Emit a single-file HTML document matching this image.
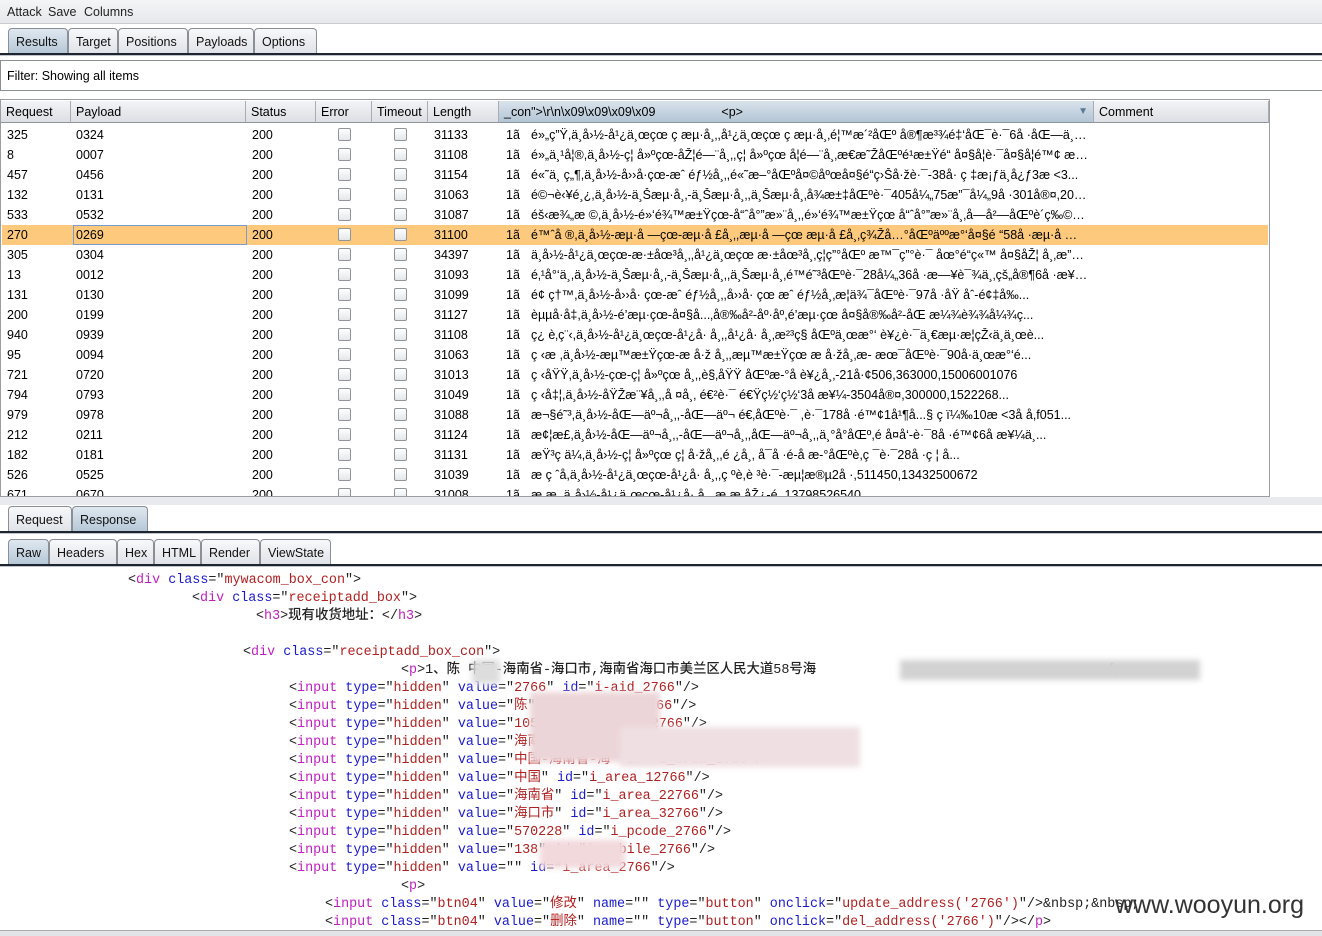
<!DOCTYPE html>
<html><head><meta charset="utf-8"><style>
*{margin:0;padding:0;box-sizing:border-box}
body{width:1322px;height:936px;overflow:hidden;background:#fff;font-family:"Liberation Sans","Noto Sans CJK SC",sans-serif;font-size:12px;color:#000;position:relative}
.abs{position:absolute}
.menu{left:0;top:0;width:1322px;height:24px;background:linear-gradient(#f4f5f7,#e6e8ec);border-bottom:1px solid #c8cbd0}
.menu span{position:absolute;top:5px;font-size:12.5px;color:#222}
.tab{position:absolute;height:26px;border:1px solid #8a8f96;border-bottom:none;border-radius:4px 4px 0 0;background:linear-gradient(#f7f8fa,#dfe2e7);font-size:12.5px;padding:6px 7px 0;color:#111}
.tab.sel{background:linear-gradient(#dfe8f0,#b4c6d6)}
.hline{position:absolute;left:0;width:1322px;height:3px;border-top:2px solid #1d2530;border-bottom:1px solid #c0c4ca}
.th{position:absolute;top:101px;height:22px;background:linear-gradient(#f3f4f6,#dcdfe4);border-right:1px solid #a9adb3;border-bottom:1px solid #8e949b;padding:4px 5px;font-size:12.5px}
.row{position:absolute;left:2px;width:1266px;height:20px;font-size:12.5px}
.row span{position:absolute;top:3px;white-space:nowrap;overflow:hidden;line-height:15px;height:16px}
.cb{position:absolute;top:3px;width:13px;height:13px;border:1px solid #8f949a;border-radius:2px;background:linear-gradient(#fff,#e4e6e9)}
.code{position:absolute;font-family:"Liberation Mono","Noto Sans CJK SC",monospace;font-size:13.4px;white-space:pre;color:#222;height:18px;line-height:18px;overflow:visible}
.code b{font-weight:500}
.t{color:#c020c0}.a{color:#1a1acc}.v{color:#b02020}
.blur{position:absolute;filter:blur(3px)}
</style></head><body>
<div class="abs menu"><span style="left:7px">Attack</span><span style="left:48px">Save</span><span style="left:84px">Columns</span></div>
<div class="tab sel" style="left:8px;top:28px;width:60px">Results</div>
<div class="tab" style="left:68px;top:28px;width:50px">Target</div>
<div class="tab" style="left:118px;top:28px;width:70px">Positions</div>
<div class="tab" style="left:188px;top:28px;width:66px">Payloads</div>
<div class="tab" style="left:254px;top:28px;width:63px">Options</div>
<div class="hline" style="top:53px"></div>
<div class="abs" style="left:0;top:60px;width:1322px;height:31px;border:1px solid #8a8f96;border-right:none;background:#fff"><span style="position:absolute;left:6px;top:8px;font-size:12.5px">Filter: Showing all items</span></div>
<div class="abs" style="left:0;top:99px;width:1270px;height:398px;border:1px solid #9a9ea4;background:#fff;overflow:hidden"><div id="rows"></div></div>
<div class="th" style="left:1px;width:70px">Request</div>
<div class="th" style="left:71px;width:175px">Payload</div>
<div class="th" style="left:246px;width:70px">Status</div>
<div class="th" style="left:316px;width:56px">Error</div>
<div class="th" style="left:372px;width:56px">Timeout</div>
<div class="th" style="left:428px;width:71px">Length</div>
<div class="th" style="left:499px;width:595px;background:linear-gradient(#d9e3ec,#b3c5d5)">_con"&gt;\r\n\x09\x09\x09\x09 &nbsp;&nbsp;&nbsp;&nbsp;&nbsp;&nbsp;&nbsp;&nbsp;&nbsp;&nbsp;&nbsp;&nbsp;&nbsp;&nbsp;&nbsp;&nbsp;&nbsp;&nbsp;&lt;p&gt;<span style="position:absolute;right:5px;top:5px;color:#5a7a98;font-size:10px">▼</span></div>
<div class="th" style="left:1094px;width:175px">Comment</div>
<div class="abs" style="left:0;top:497px;width:1322px;height:8px;background:#e8eaed"></div>
<div class="tab" style="left:8px;top:506px;width:64px">Request</div>
<div class="tab sel" style="left:72px;top:506px;width:76px">Response</div>
<div class="hline" style="top:531px"></div>
<div class="tab sel" style="left:8px;top:539px;width:41px">Raw</div>
<div class="tab" style="left:49px;top:539px;width:68px">Headers</div>
<div class="tab" style="left:117px;top:539px;width:37px">Hex</div>
<div class="tab" style="left:154px;top:539px;width:47px">HTML</div>
<div class="tab" style="left:201px;top:539px;width:59px">Render</div>
<div class="tab" style="left:260px;top:539px;width:71px">ViewState</div>
<div class="hline" style="top:564px"></div>
<div id="code"></div>
<div class="blur" style="left:900px;top:660px;width:300px;height:20px;background:#d2d2d2"></div>
<div class="blur" style="left:472px;top:660px;width:28px;height:24px;background:#ddd"></div>
<div class="blur" style="left:530px;top:692px;width:130px;height:70px;background:#ecd5d8"></div>
<div class="blur" style="left:620px;top:727px;width:240px;height:40px;background:#efdfe2"></div>
<div class="blur" style="left:540px;top:840px;width:85px;height:28px;background:#f2d9dc"></div>
<div class="abs" style="left:1115px;top:891px;font-size:25px;color:#333">www.wooyun.org</div>
<div class="abs" style="left:0;top:930px;width:1322px;height:6px;background:#e2e4e7;border-top:1px solid #aaa"></div>
<script>
var d=[["325","0324","31133","é»„ç”Ÿ,ä¸­å›½-å¹¿ä¸œçœ ç æµ·å¸‚,å¹¿ä¸œçœ ç æµ·å¸‚é¦™æ´²åŒº å®¶æ³¾é‡‘åŒ¯è·¯6å ·åŒ—ä¸œç..."],["8","0007","31108","é»„ä¸¹å¦®,ä¸­å›½-ç¦ å»ºçœ-åŽ¦é—¨å¸‚,ç¦ å»ºçœ å¦é—¨å¸‚æ€æ˜ŽåŒºé¹­æ±Ÿé“ å¤§å­¦è·¯å¤§å­¦é™¢ æ¥..."],["457","0456","31154","é«˜ä¸ ç„¶,ä¸­å›½-å››å·çœ-æˆ éƒ½å¸‚,é«˜æ–°åŒºå¤©åºœå¤§é“ç›Šå·žè·¯-38å· ç ‡æ¡ƒä¸­å¿ƒ3æ <3..."],["132","0131","31063","é©¬è‹¥é¸¿,ä¸­å›½-ä¸Šæµ·å¸‚-ä¸Šæµ·å¸‚,ä¸Šæµ·å¸‚å¾æ±‡åŒºè·¯405å¼„75æ”¯å¼„9å ·301å®¤,201103..."],["533","0532","31087","éš‹æ¾„æ ©,ä¸­å›½-é»‘é¾™æ±Ÿçœ-å“ˆå°”æ»¨å¸‚,é»‘é¾™æ±Ÿçœ å“ˆå°”æ»¨å¸‚å—å²—åŒºè´­ç‰©å13å ·æ¥¼ä¸‰ç¼˜è¶…å..."],["270","0269","31100","é™ˆå ®,ä¸­å›½-æµ·å —çœ-æµ·å £å¸‚,æµ·å —çœ æµ·å £å¸‚ç¾Žå…°åŒºäººæ°‘å¤§é “58å ·æµ·å —å¤..."],["305","0304","34397","ä¸­å›½-å¹¿ä¸œçœ-æ·±åœ³å¸‚,å¹¿ä¸œçœ æ·±åœ³å¸‚ç¦ç”°åŒº æ™¯ç”°è·¯ åœ°é“ç«™ å¤§åŽ¦ å¸‚æ”¿åºœ å¤§é“ “..."],["13","0012","31093","é‚¹å°‘ä¸,ä¸­å›½-ä¸Šæµ·å¸‚-ä¸Šæµ·å¸‚,ä¸Šæµ·å¸‚é™é˜³åŒºè·¯28å¼„36å ·æ—¥è¯¾ä¸‚çš„å®¶6å ·æ¥¼6..."],["131","0130","31099","é¢ ç†™,ä¸­å›½-å››å· çœ-æˆ éƒ½å¸‚,å››å· çœ æˆ éƒ½å¸‚æ­¦ä¾¯åŒºè·¯97å ·åŸ åˆ-é¢‡å‰..."],["200","0199","31127","èµµå·å‡,ä¸­å›½-é’æµ·çœ-å¤§å...‚å®‰å²-åº·åº,é’æµ·çœ å¤§å®‰å²-åŒ æ¼¾è¾¾å¼¾ç..."],["940","0939","31108","ç¿ è‚ç¨‹,ä¸­å›½-å¹¿ä¸œçœ-å¹¿å· å¸‚,å¹¿å· å¸‚æ²³ç§ åŒºä¸œæ°‘ è¥¿è·¯ä¸€æµ·æ¦çŽ‹ä¸ä¸œè..."],["95","0094","31063","ç ‹æ ,ä¸­å›½-æµ™æ±Ÿçœ-æ ­å·ž å¸‚,æµ™æ±Ÿçœ æ ­å·žå¸‚æ- æœ¯åŒºè·¯90å·ä¸œæ°‘é..."],["721","0720","31013","ç ‹åŸŸ,ä¸­å›½-çœ-ç¦ å»ºçœ å¸‚,è§‚åŸŸ åŒºæ-°å è¥¿å¸‚-21å·¢506,363000,15006001076"],["794","0793","31049","ç ‹å‡¦,ä¸­å›½-åŸŽæ¨¥å¸‚,å ¤å¸‚ é€²è·¯ é€Ÿç½‘ç½‘3å æ¥¼-3504å®¤,300000,1522268..."],["979","0978","31088","æ¬§é˜³,ä¸­å›½-åŒ—äº¬å¸‚,-åŒ—äº¬ é€‚åŒºè·¯ ,è·¯178å ·é™¢1å¹¶å...§ ç ï¼‰10æ <3å å,f051..."],["212","0211","31124","æ¢¦æ£,ä¸­å›½-åŒ—äº¬å¸‚,-åŒ—äº¬å¸‚,åŒ—äº¬å¸‚,ä¸°å°åŒº,é å¤å‘-è·¯8å ·é™¢6å æ¥¼ä¸..."],["182","0181","31131","æŸ³ç ä¼,ä¸­å›½-ç¦ å»ºçœ ç¦ å·žå¸‚,é ¿å¸‚ å¯å ·é-å  æ-°åŒºè,ç ¯è·¯28å ·ç ¦ å..."],["526","0525","31039","æ ç ˆå,ä¸­å›½-å¹¿ä¸œçœ-å¹¿å· å¸‚,ç ºè,è ³è·¯-æµ¦æ®µ2å ·,511450,13432500672"],["671","0670","31008","æ æ ,ä¸­å›½-å¹¿ä¸œçœ-å¹¿å· å¸‚,æ æ åŽ¿-é ,13798526540"]];
var h="";d.forEach(function(r,i){var y=25+i*20;var hl=i==5;
h+='<div class="row" style="top:'+y+'px;left:1px;'+(hl?'background:#fdc97d':'')+'">'+(hl?'<div style="position:absolute;left:71px;top:0;width:174px;height:20px;border:1px solid #7a9ccc;background:#fdc97d"></div>':'')+
'<span style="left:5px">'+r[0]+'</span><span style="left:74px">'+r[1]+'</span><span style="left:250px">200</span><div class="cb" style="left:336px"></div><div class="cb" style="left:392px"></div><span style="left:432px">'+r[2]+'</span><span style="left:504px">1ã</span><span style="left:529px;width:558px;text-overflow:ellipsis">'+r[3]+'</span></div>';});
document.getElementById('rows').innerHTML=h;
function T(s){return '<span class="t">'+s+'</span>'}function A(s){return '<span class="a">'+s+'</span>'}function V(s){return '<span class="v">'+s+'</span>'}
function inp(v,id){return '&lt;'+T('input')+' '+A('type')+'="'+V('hidden')+'" '+A('value')+'="'+V(v)+'" '+A('id')+'="'+V(id)+'"/&gt;'}
var L=[[128,'&lt;'+T('div')+' '+A('class')+'="'+V('mywacom_box_con')+'"&gt;'],[192,'&lt;'+T('div')+' '+A('class')+'="'+V('receiptadd_box')+'"&gt;'],[256,'&lt;'+T('h3')+'&gt;<b>现有收货地址：</b>&lt;/'+T('h3')+'&gt;'],[0,''],[243,'&lt;'+T('div')+' '+A('class')+'="'+V('receiptadd_box_con')+'"&gt;'],[401,'&lt;'+T('p')+'&gt;<b>1、陈 中国-海南省-海口市,海南省海口市美兰区人民大道58号海</b>                                   &lt;/'+T('p')+'&gt;'],
[289,inp('2766','i-aid_2766')],[289,inp('陈','i_rname_2766')],[289,inp('105','i_email_2766')],[289,inp('海南省海口市美','i_address_2766').replace('id=','                      id=')],[289,inp('中国-海南省-海','i_area_2766')],[289,inp('中国','i_area_12766')],[289,inp('海南省','i_area_22766')],[289,inp('海口市','i_area_32766')],[289,inp('570228','i_pcode_2766')],[289,inp('138','i_mobile_2766')],[289,inp('','i_area_2766')],[401,'&lt;'+T('p')+'&gt;'],
[325,'&lt;'+T('input')+' '+A('class')+'="'+V('btn04')+'" '+A('value')+'="'+V('修改')+'" '+A('name')+'="" '+A('type')+'="'+V('button')+'" '+A('onclick')+'="'+V("update_address('2766')")+'"/&gt;&amp;nbsp;&amp;nbsp;'],
[325,'&lt;'+T('input')+' '+A('class')+'="'+V('btn04')+'" '+A('value')+'="'+V('删除')+'" '+A('name')+'="" '+A('type')+'="'+V('button')+'" '+A('onclick')+'="'+V("del_address('2766')")+'"/&gt;&lt;/'+T('p')+'&gt;']];
var c="";L.forEach(function(l,i){c+='<div class="code" style="left:'+l[0]+'px;top:'+(572+i*18)+'px">'+l[1]+'</div>'});
document.getElementById('code').innerHTML=c;
</script>
</body></html>
